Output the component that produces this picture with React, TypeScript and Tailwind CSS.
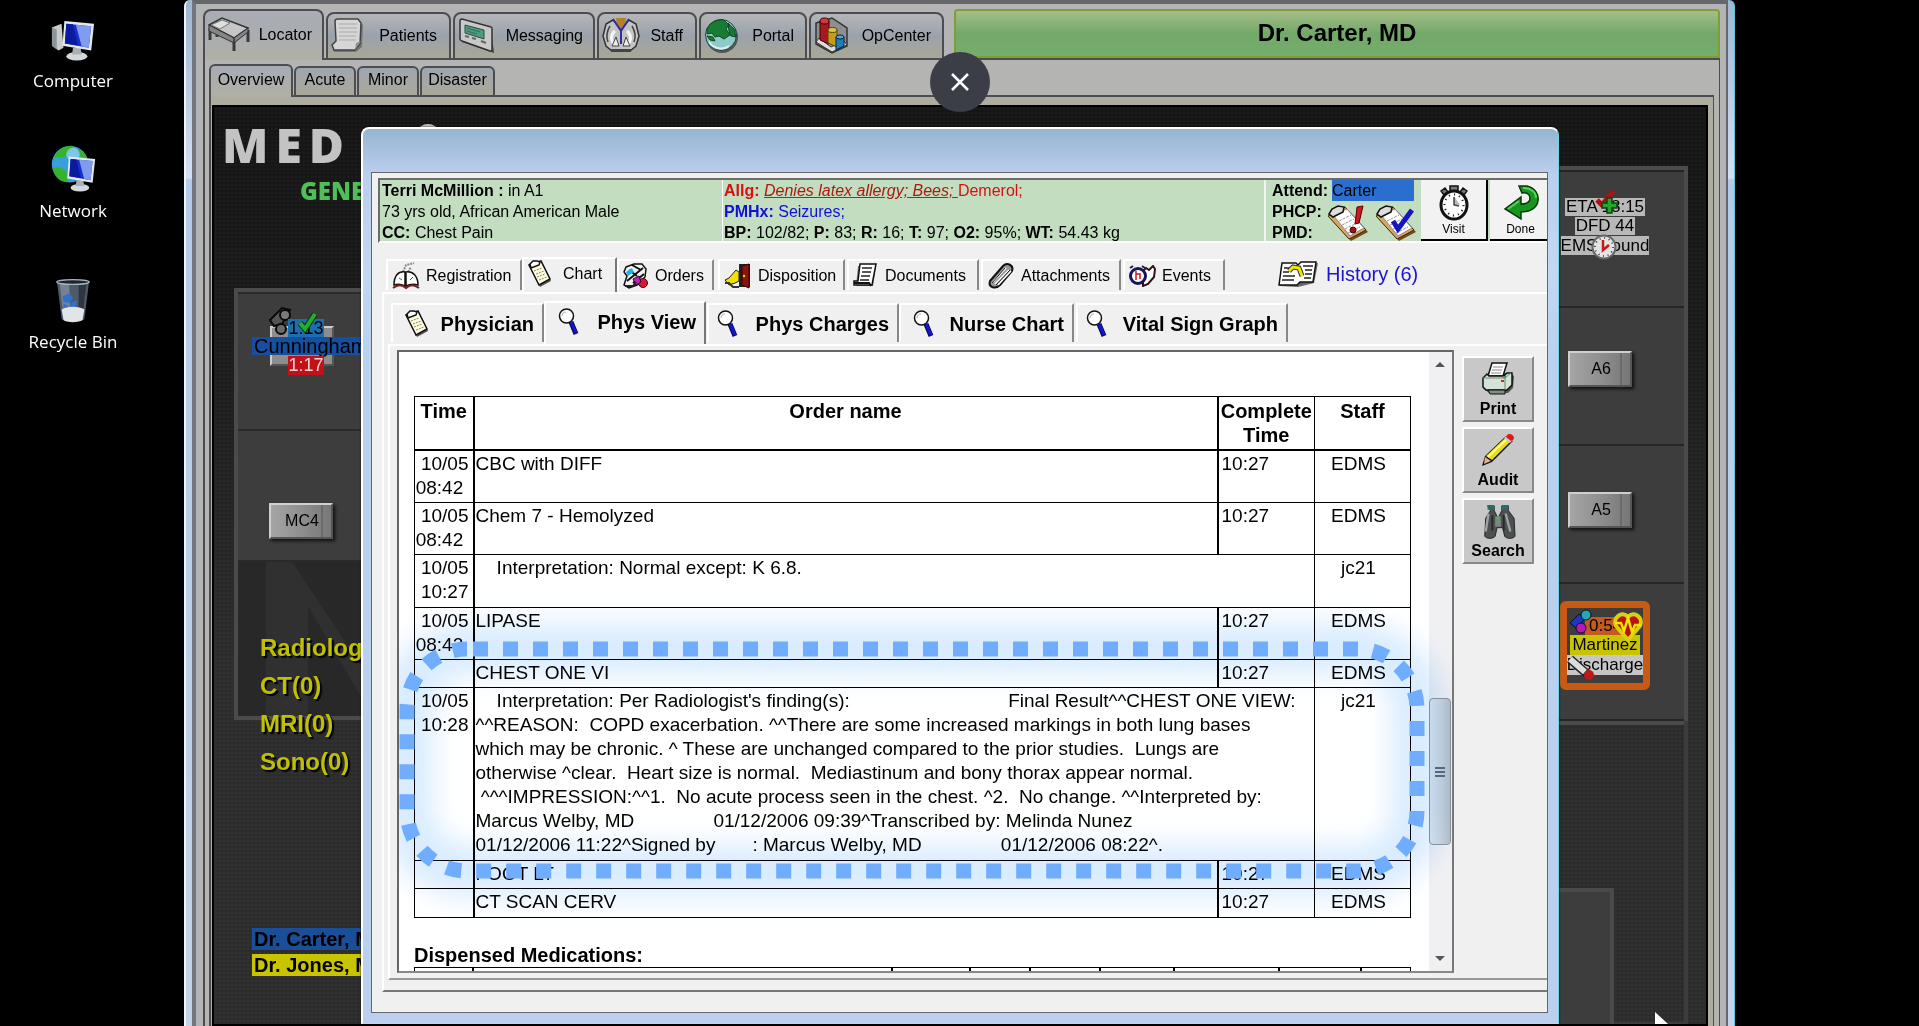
import React from "react";

/* ---------- desktop icons ---------- */
const Monitor = ({ x = 0, y = 0, s = 1 }: { x?: number; y?: number; s?: number }) => (
  <g transform={`translate(${x} ${y}) scale(${s})`}>
    <ellipse cx="15" cy="37" rx="11" ry="4.500" fill="#d4d8dc" />
    <path d="M11 28h8l1 7H10z" fill="#aab0b6" />
    <path d="M2 0L33 3 30 31 0 26z" fill="#e4e8ec" />
    <path d="M4 3L30 5.500 27.500 28 2.500 23.500z" fill="#1530c8" />
    <path d="M14 4L30 5.500 27.500 28 20 26.500z" fill="#7f9cf0" />
    <path d="M4 3l7 .6 5 22-13.500-2.100z" fill="#0a1ba0" />
  </g>
);
const ComputerIcon = () => (
  <svg width="48" height="44" viewBox="0 0 48 46" aria-hidden="true">
    <path d="M2 9l10-4 2 25-5 3-7-5z" fill="#c9ccce" />
    <path d="M2 9l5 2v21l-5-4z" fill="#8f9498" />
    <Monitor x={13} y={2} />
  </svg>
);
const NetworkIcon = () => (
  <svg width="48" height="50" viewBox="0 0 48 52" aria-hidden="true">
    <circle cx="21" cy="22" r="19" fill="#3a9ed8" />
    <path d="M4 15C9 5 17 2 24 3c-1 5-6 5-7 10-3 3-8 2-13 2zM3 26c5-2 11 0 14 4s0 9 1 11C8 40 4 33 3 26zM29 6c6 3 9 7 10 12l-8-3z" fill="#36b32c" />
    <circle cx="24" cy="12" r="7" fill="#bff0ff" opacity=".5" />
    <Monitor x={18} y={14} s={0.88} />
  </svg>
);
const RecycleIcon = () => (
  <svg width="38" height="46" viewBox="0 0 40 48" aria-hidden="true">
    <path d="M3 3h34l-5 40c-4 4-20 4-24 0z" fill="#4e5a68" />
    <path d="M6 6h10l1 26H9z" fill="#8793a2" opacity=".7" />
    <path d="M26 6h8l-3 26h-5z" fill="#2c3540" />
    <path d="M9 19l7-3 4 5-4 5-6-1zM18 26l6-3-1 9-7 1zM10 27l5 2-1 5-4-2z" fill="#2f70d0" />
    <path d="M8 33c6-4 18-4 24 0l-2 11c-5 3-16 3-20 0z" fill="#e2e5e8" />
    <ellipse cx="20" cy="4" rx="17" ry="2.500" fill="#1d2630" stroke="#a7b5c2" strokeWidth="1.500" />
  </svg>
);

/* ---------- application tab icons ---------- */
const BedIcon = () => (
  <svg width="42" height="36" viewBox="0 0 42 36" aria-hidden="true">
    <path d="M2 11v12M9 12v8M26 22v12M40 13v12" stroke="#3a3a3a" strokeWidth="3" />
    <path d="M1 8L14 1l26 10-14 10z" fill="#c6c6c6" stroke="#333" strokeWidth="1.500" />
    <path d="M1 8l25 13v5L1 14zM26 21l14-10v4L26 26z" fill="#858585" stroke="#333" />
    <path d="M3 8L14 3l8 3-10 6z" fill="#dedede" stroke="#777" />
  </svg>
);
const PaperIcon = () => (
  <svg width="34" height="36" viewBox="0 0 34 36" aria-hidden="true">
    <path d="M6 2h22l4 5-1 22-6 5H3l-2-6 4-4z" fill="#777" />
    <path d="M4 3c0-2 2-2 3-2h20l3 4-1 21-5 6H3l-2-5 4-4z" fill="#d6d6d6" stroke="#444" strokeWidth="1.500" />
    <path d="M8 6h18M8 10h18M8 14h18M8 18h17M8 22h17" stroke="#a9a9a9" />
    <path d="M24 32l1-7 5-2z" fill="#8f8f8f" />
  </svg>
);
const PagerIcon = () => (
  <svg width="37" height="36" viewBox="0 0 37 36" aria-hidden="true">
    <path d="M3 2l30 9 3 24-32-11z" fill="#444" />
    <path d="M2 3c0-2 1-2 2-2l29 8c1 0 1 1 1 2v21c0 1-1 1-2 1L4 23c-2-1-2-1-2-3z" fill="#c9c9c9" stroke="#333" strokeWidth="1.500" />
    <path d="M7 7l19 5v9L7 15z" fill="#4f9a80" stroke="#2f4f45" />
    <path d="M9 10l13 4M9 13l10 3" stroke="#2f6f58" />
    <path d="M7 18l4 1M14 20l4 1M23 23l5 2" stroke="#666" strokeWidth="2" />
  </svg>
);
const StaffIcon = () => (
  <svg width="38" height="36" viewBox="0 0 38 36" aria-hidden="true">
    <path d="M11 2L4 6 1 18l3 10 6 5h18l6-5 3-10-3-12-7-4-8 9z" fill="#c3c3c3" stroke="#333" strokeWidth="1.500" />
    <path d="M14 0h10l-1 8-4 3-4-3z" fill="#b58028" />
    <path d="M11 1l8 12 8-12M19 12v14" fill="none" stroke="#2831a0" strokeWidth="2" />
    <path d="M8 8c-3 5-4 11-2 16M30 8c3 5 4 11 2 16" fill="none" stroke="#444" strokeWidth="1.500" />
    <path d="M13 13c-4 3-5 9-1 13M25 13c4 3 5 9 1 13" fill="none" stroke="#f4f4f4" strokeWidth="3" />
    <path d="M14 19l-4 9h7zM24 19l4 9h-7z" fill="#eee" stroke="#444" />
    <path d="M9 31h20v3H9z" fill="#444" />
  </svg>
);
const GlobeIcon = () => (
  <svg width="34" height="36" viewBox="0 0 34 36" aria-hidden="true">
    <circle cx="18" cy="19" r="16" fill="#555" />
    <circle cx="17" cy="17" r="15.500" fill="#8fc9c9" stroke="#24443f" />
    <path d="M3 11C7 4 13 1 20 2l5 5-3 4 4 6-6 4-5-3-4 1-3-4-5 1zM24 5l6 6 2 8-5-1-2-5zM3 18l6 1 2 4-5-1z" fill="#187c34" stroke="#0d4a20" />
    <path d="M5 24c4 6 13 9 20 4" stroke="#d9f2f2" strokeWidth="2" fill="none" />
  </svg>
);
const BarsIcon = () => (
  <svg width="36" height="38" viewBox="0 0 36 38" aria-hidden="true">
    <path d="M2 6L18 1l15 10v18L18 36 2 27z" fill="#8f8f8f" stroke="#333" strokeWidth="1.500" />
    <path d="M2 25l16 10 15-7-3-4-13 6L5 21z" fill="#dedede" stroke="#333" />
    <path d="M6 4h9v23l-9-4z" fill="#a51a20" stroke="#400" />
    <path d="M14 13h9v17l-9-4z" fill="#c99a20" stroke="#540" />
    <path d="M22 20h8v9l-8 4z" fill="#1b80b8" stroke="#024" />
    <ellipse cx="10.500" cy="4" rx="4.500" ry="3" fill="#cf3a3a" stroke="#400" />
    <ellipse cx="18.500" cy="13" rx="4.500" ry="2.500" fill="#e0bd50" stroke="#540" />
    <ellipse cx="26" cy="20" rx="4" ry="2" fill="#53aad4" stroke="#024" />
  </svg>
);

/* ---------- chart window icons ---------- */
const BookIcon = () => (
  <svg width="28" height="28" viewBox="0 0 28 28" aria-hidden="true">
    <path d="M11 10l3-7 8-2M16 10l3-5" stroke="#888" fill="none" strokeWidth="2" strokeDasharray="2 1" />
    <path d="M2 23C2 14 6 9 13 10v14c-4-2-8-2-11-1zM26 23c0-9-5-14-12-13v14c4-2 8-2 12-1z" fill="#fff" stroke="#111" strokeWidth="1.500" />
    <path d="M1 26c5-4 10-3 13 0 3-3 8-4 13 0" fill="none" stroke="#722" strokeWidth="2" />
    <path d="M7 16l3 2M18 18l3-3" stroke="#555" />
  </svg>
);
const ClipboardIcon = () => (
  <svg width="24" height="27" viewBox="0 0 24 27" aria-hidden="true">
    <path d="M2 6L14 2l9 19-11 6z" fill="#555" />
    <path d="M1 5L13 1l9 18-11 6z" fill="#fffbe0" stroke="#111" strokeWidth="1.500" />
    <path d="M2 4l3-3 4 0 3 1-1 3-8 3z" fill="#fff" stroke="#111" strokeWidth="1.500" />
    <path d="M6 11l8-3M8 14l8-3M9 17l8-3M11 20l8-3" stroke="#8a8660" strokeDasharray="2 1" />
  </svg>
);
const OrdersIcon = () => (
  <svg width="26" height="26" viewBox="0 0 26 26" aria-hidden="true">
    <path d="M3 4l8-3h8l4 5-1 8-8 8-8 3-5-3 3-9-3-4z" fill="#f2f2f2" stroke="#111" strokeWidth="1.500" />
    <path d="M9 2l9 5M6 7l8 6M4 18L20 5M10 20l11-9" stroke="#111" strokeWidth="2" />
    <path d="M3 9l6-4 2 4-6 4z" fill="#1db2e8" />
    <circle cx="20" cy="20" r="4.500" fill="#d81830" stroke="#400" />
    <path d="M10 16l6-3 2 6-5 3z" fill="#c020b8" stroke="#303" />
    <path d="M2 23h8l3-4" stroke="#222" strokeWidth="2" fill="none" />
  </svg>
);
const DoorIcon = () => (
  <svg width="28" height="26" viewBox="0 0 28 26" aria-hidden="true">
    <path d="M15 1h11v23H15z" fill="#222" />
    <path d="M18 3l7-2v24l-7-3z" fill="#8c1212" stroke="#300" />
    <path d="M1 17l4-2 7-8 3 2v9l-4 2-6 2z" fill="#f2e000" stroke="#222" />
    <path d="M1 20h4l4 4h6" stroke="#333" strokeWidth="2" fill="none" />
    <circle cx="20" cy="13" r="1.200" fill="#fc0" />
  </svg>
);
const DocsIcon = () => (
  <svg width="26" height="26" viewBox="0 0 26 26" aria-hidden="true">
    <path d="M5 3h18l-3 20H3z" fill="#777" />
    <path d="M7 1h16l-4 21H1v-4h4z" fill="#fff" stroke="#111" strokeWidth="1.500" />
    <path d="M9 5h10M9 9h9M8 13h9M7 17h9" stroke="#222" strokeWidth="1.500" />
    <path d="M1 20h15l2 3" stroke="#111" strokeWidth="2" fill="none" />
  </svg>
);
const ClipIcon = () => (
  <svg width="28" height="27" viewBox="0 0 28 27" aria-hidden="true">
    <path d="M3 19L16 4c4-4 11-1 9 5L13 23c-5 5-12 2-10-4z" fill="#999" stroke="#111" strokeWidth="2" />
    <path d="M6 20L19 6M8 22L22 8M11 23L24 9" stroke="#fff" strokeWidth="1.500" />
    <path d="M5 21L18 6M9 23L23 8" stroke="#222" />
  </svg>
);
const EventsIcon = () => (
  <svg width="27" height="22" viewBox="0 0 27 22" aria-hidden="true">
    <path d="M14 6l3-3 3 2 4-4 2 3-1 8-6 7-5 2z" fill="#fff" stroke="#311" strokeWidth="2" />
    <circle cx="9" cy="11" r="7.500" fill="#fff" stroke="#15155a" strokeWidth="3" />
    <path d="M7 6v9M7 9h4v5" stroke="#d01818" strokeWidth="1.500" fill="none" />
    <path d="M1 3l3-2M13 1l3 2" stroke="#222" strokeWidth="2" />
  </svg>
);
const MagnifierIcon = () => (
  <svg width="22" height="28" viewBox="0 0 22 28" aria-hidden="true">
    <path d="M13 14l5 12" stroke="#0a0a55" strokeWidth="5" />
    <path d="M13 14l5 11" stroke="#1414d8" strokeWidth="3" />
    <ellipse cx="8.500" cy="8" rx="7" ry="7" fill="#fff" stroke="#111" strokeWidth="1.500" />
    <path d="M4 8c0-3 2-4 4-4" stroke="#aaa" fill="none" />
  </svg>
);
const HistoryIcon = () => (
  <svg width="40" height="27" viewBox="0 0 40 27" aria-hidden="true">
    <path d="M3 4l15 3 22-5-4 20-16 4-18-1z" fill="#666" />
    <path d="M4 2h14l2 2 3-3h15l-3 20H22l-3 3H1z" fill="#fff" stroke="#111" strokeWidth="1.500" />
    <path d="M6 7h5M5 11h6M5 15h12M4 19h12M25 5h10M27 9h7M27 13h7M26 17h7" stroke="#222" strokeWidth="1.500" />
    <path d="M11 10l4-4 6 1 3 8" stroke="#333" strokeWidth="5" fill="none" />
    <path d="M11 10l4-4 6 1 3 8" stroke="#f0e800" strokeWidth="3" fill="none" />
  </svg>
);
const ChartNote = ({ kind }: { kind: "alert" | "check" }) => (
  <svg width="42" height="37" viewBox="0 0 42 37" aria-hidden="true">
    <path d="M2 12l17-9 22 24-17 9z" fill="#7a4a10" />
    <path d="M1 11L18 2l21 23-17 9z" fill="#d9a860" stroke="#3a2a10" />
    <path d="M6 10l14-6 17 19-14 8z" fill="#fff" stroke="#888" />
    <path d="M2 9l3-5 6-3 6 1-1 5-10 5z" fill="#ddd" stroke="#111" strokeWidth="1.500" />
    <path d="M12 16l12-6M15 20l12-6M18 24l12-6M21 28l12-6" stroke="#999" strokeDasharray="3 1" />
    {kind === "alert" ? (
      <g>
        <path d="M30 2l6-1-4 17-4 1z" fill="#d01822" stroke="#500" />
        <circle cx="26" cy="25" r="3" fill="#a01018" stroke="#400" />
      </g>
    ) : (
      <path d="M18 16l5 8L37 5" stroke="#1616c0" strokeWidth="5" fill="none" />
    )}
  </svg>
);
const StopwatchIcon = () => (
  <svg width="32" height="36" viewBox="0 0 32 36" aria-hidden="true">
    <path d="M12 1h8v5h-8zM3 6l4-3 3 4-4 3zM29 6l-4-3-3 4 4 3z" fill="#777" stroke="#111" strokeWidth="1.500" />
    <ellipse cx="16" cy="20" rx="13" ry="14" fill="#fff" stroke="#111" strokeWidth="3" />
    <ellipse cx="16" cy="20" rx="9.500" ry="10.500" fill="none" stroke="#222" strokeWidth="2" strokeDasharray="1.200 4" />
    <path d="M16 11v9h6z" fill="#bbb" />
    <path d="M16 12v8l5 1" stroke="#444" strokeWidth="1.500" fill="none" />
  </svg>
);
const DoneIcon = () => (
  <svg width="36" height="36" viewBox="0 0 36 36" aria-hidden="true">
    <path d="M16 1h8c8 2 12 8 11 15-1 7-8 11-17 11v7L2 24l16-12v7c6 0 9-2 9-6s-4-6-8-5z" fill="#16961e" stroke="#053a08" strokeWidth="1.500" />
    <path d="M20 3c8 0 13 4 13 10M5 24l11-8" stroke="#5fd060" strokeWidth="2" fill="none" />
  </svg>
);
const PrinterIcon = () => (
  <svg width="34" height="34" viewBox="0 0 34 34" aria-hidden="true">
    <path d="M4 15l6-4h19l4 3-1 12-5 5H8l-6-5z" fill="#555" />
    <path d="M11 1h15l-4 13H7z" fill="#fff" stroke="#111" strokeWidth="1.500" />
    <path d="M12 5h10M11 8h10M10 11h10" stroke="#888" />
    <path d="M2 16l4-4 2 2h15l3-3h5v12l-5 5H5l-3-3z" fill="#d3e4d6" stroke="#111" strokeWidth="1.500" />
    <path d="M2 16h22l6-5M24 16v12" stroke="#6f8873" fill="none" />
    <path d="M20 19h3" stroke="#e02020" strokeWidth="2" />
    <path d="M22 15h3" stroke="#20b050" strokeWidth="2" />
    <path d="M7 28h17v4H9z" fill="#7a8f7c" stroke="#111" />
  </svg>
);
const PencilIcon = () => (
  <svg width="34" height="34" viewBox="0 0 34 34" aria-hidden="true">
    <path d="M1 33l3-10L25 3l7 5L11 29z" fill="#111" />
    <path d="M5 23L24 5l5 4L11 27z" fill="#e8dd18" />
    <path d="M7 24L26 6" stroke="#fffb90" strokeWidth="2" />
    <path d="M4 24l6 4-7 3z" fill="#e0b090" />
    <path d="M23 5l3-3 6 5-3 3z" fill="#c8c8c8" />
    <path d="M26 2c4-3 9 2 6 5l-2 1-5-4z" fill="#e01818" />
  </svg>
);
const BinocularsIcon = () => (
  <svg width="38" height="38" viewBox="0 0 38 38" aria-hidden="true">
    <path d="M8 2h7v5l3 6v8h2v-8l3-6V2h7v5l6 8 1 19c-2 3-9 3-11 0l-2-9h-6l-2 9c-2 3-9 3-11 0l1-19 5-8z" fill="#4c5050" stroke="#222" />
    <path d="M8 1h7v5H8zM23 1h7v5h-7z" fill="#2c6b66" />
    <path d="M9 10L6 29M27 10l5 19" stroke="#9da3a3" strokeWidth="2.500" />
    <path d="M16 13h6v11h-6z" fill="#7d8484" />
    <path d="M13 12v16M25 12v16" stroke="#262a2a" strokeWidth="2" />
    <path d="M17 15h3" stroke="#40c040" strokeWidth="2" />
  </svg>
);

/* ---------- shared pieces ---------- */
const AppTab = ({ label, icon, className, active }: { label: string; icon: React.ReactNode; className: string; active?: boolean }) => (
  <button
    type="button"
    role="tab"
    aria-selected={!!active}
    className={`flex items-center justify-between rounded-t-lg border-2 border-[#4c4d50] pl-[3px] text-base ${
      active
        ? "h-[51px] border-b-0 bg-linear-to-b from-[#a9adb4] via-[#a9adb2] to-[#b1b0a2] pb-[2px]"
        : "h-12 bg-linear-to-b from-[#b4b6b8] via-[#9ba2ad] to-[#a9a894]"
    } ${className}`}
  >
    {icon}
    <span>{label}</span>
  </button>
);

const SubTab = ({ label, className, active }: { label: string; className: string; active?: boolean }) => (
  <button
    type="button"
    role="tab"
    aria-selected={!!active}
    className={`rounded-t-md border-2 border-[#4c4d50] pb-1 text-base leading-5 ${
      active ? "h-[33px] border-b-0 bg-linear-to-b from-[#a7abb4] to-[#b1b0a4]" : "h-[31px] bg-linear-to-b from-[#9fa6b1] to-[#a9a898]"
    } ${className}`}
  >
    {label}
  </button>
);

const ChartTab = ({ label, icon, className, active }: { label: string; icon: React.ReactNode; className: string; active?: boolean }) => (
  <button
    type="button"
    role="tab"
    aria-selected={!!active}
    className={`flex shrink-0 items-center whitespace-nowrap border-t-2 border-l-2 border-white bg-[#f0f0f0] pl-1 text-base ${
      active ? "h-[35px] gap-[11px] border-r-2 border-r-[#777] pb-1" : "mb-[2px] h-[31px] gap-[6px] border-r-2 border-r-[#888]"
    } ${className}`}
  >
    {icon}
    {label}
  </button>
);

const ViewTab = ({ label, icon, className, active }: { label: string; icon: React.ReactNode; className: string; active?: boolean }) => (
  <button
    type="button"
    role="tab"
    aria-selected={!!active}
    className={`flex shrink-0 items-center justify-between whitespace-nowrap border-t-2 border-l-2 border-white bg-[#f0f0f0] pr-2 text-xl font-bold ${
      active ? "h-[43px] border-r-2 border-r-[#777] pb-1" : "mb-[2px] h-[39px] border-r-2 border-r-[#888]"
    } ${className}`}
  >
    {icon}
    {label}
  </button>
);

const ToolButton = ({ label, icon }: { label: string; icon: React.ReactNode }) => (
  <button
    type="button"
    className="flex h-[66px] w-full flex-col items-center justify-between border-2 border-t-white border-r-[#888] border-b-[#888] border-l-white bg-[#c8c8c8] pt-1 text-base leading-[22px] font-bold"
  >
    {icon}
    {label}
  </button>
);

const Bed = ({ label, className }: { label: string; className: string }) => (
  <button
    type="button"
    className={`absolute flex h-9 w-16 items-stretch border-2 border-t-[#cfcfcf] border-r-[#555] border-b-[#555] border-l-[#cfcfcf] bg-linear-to-r from-[#a5a5a5] via-[#8f8f8f] to-[#777] text-base text-black shadow-[2px_2px_3px_#111] ${className}`}
  >
    <span className="flex flex-1 items-center justify-center border-r-2 border-[#6a6a6a] pl-3">{label}</span>
    <span className="w-2" />
  </button>
);

type Row = { time: string[]; name: React.ReactNode; done?: string; staff: string; h: string };
const report = [
  "    Interpretation: Per Radiologist's finding(s):                              Final Result^^CHEST ONE VIEW:",
  "^^REASON:  COPD exacerbation. ^^There are some increased markings in both lung bases",
  "which may be chronic. ^ These are unchanged compared to the prior studies.  Lungs are",
  "otherwise ^clear.  Heart size is normal.  Mediastinum and bony thorax appear normal.",
  " ^^^IMPRESSION:^^1.  No acute process seen in the chest. ^2.  No change. ^^Interpreted by:",
  "Marcus Welby, MD               01/12/2006 09:39^Transcribed by: Melinda Nunez",
  "01/12/2006 11:22^Signed by       : Marcus Welby, MD               01/12/2006 08:22^.",
].join("\n");
const rows: Row[] = [
  { time: ["10/05", "08:42 "], name: "CBC with DIFF", done: "10:27", staff: "EDMS", h: "h-[53px]" },
  { time: ["10/05", "08:42 "], name: "Chem 7 - Hemolyzed", done: "10:27", staff: "EDMS", h: "h-[52px]" },
  { time: ["10/05", "10:27"], name: "    Interpretation: Normal except: K 6.8.", staff: "jc21", h: "h-[53px]" },
  { time: ["10/05", "08:42 "], name: "LIPASE", done: "10:27", staff: "EDMS", h: "h-[52px]" },
  { time: [], name: "CHEST ONE VI", done: "10:27", staff: "EDMS", h: "h-[28px]" },
  { time: ["10/05", "10:28"], name: report, staff: "jc21", h: "h-[173px]" },
  { time: [], name: "FOOT LT", done: "10:27", staff: "EDMS", h: "h-[28px]" },
  { time: [], name: "CT SCAN CERV", done: "10:27", staff: "EDMS", h: "h-[29px]" },
];

const OrdersTable = () => (
  <table className="w-full table-fixed border-collapse border border-black">
    <colgroup>
      <col className="w-[59px]" />
      <col />
      <col className="w-[97px]" />
      <col className="w-24" />
    </colgroup>
    <thead>
      <tr className="h-[53px] border-b-2 border-black align-top text-xl leading-6">
        <th className="border-r-2 border-black pt-[2px]">Time</th>
        <th className="border-r-2 border-black pt-[2px]">Order name</th>
        <th className="border-r border-black pt-[2px]">Complete Time</th>
        <th className="border-r border-black pt-[2px]">Staff</th>
      </tr>
    </thead>
    <tbody className="text-[19px]">
      {rows.map((r, i) => (
        <tr key={i} className={`border-b border-black align-top leading-6 ${r.h}`}>
          <td className="border-r-2 border-black pt-px pr-1 text-right whitespace-pre">{r.time.join("\n")}</td>
          <td colSpan={r.done ? 1 : 2} className="border-r border-black pt-px pl-px text-left whitespace-pre">
            {r.name}
          </td>
          {r.done && <td className="border-r border-l-2 border-black pt-px pl-[3px] text-left">{r.done}</td>}
          <td className="pt-px pr-2 text-center">{r.staff}</td>
        </tr>
      ))}
    </tbody>
  </table>
);

const Callout = () => (
  <svg className="pointer-events-none absolute top-[297px] right-[35px] left-2 h-[222px] w-[calc(100%-43px)] overflow-visible" aria-hidden="true">
    <defs>
      <filter id="glow" x="-20%" y="-40%" width="140%" height="180%">
        <feGaussianBlur stdDeviation="13" />
      </filter>
    </defs>
    <rect width="100%" height="100%" rx="60" fill="none" stroke="#bfe0ff" strokeOpacity=".6" strokeWidth="52" filter="url(#glow)" className="mix-blend-multiply" />
    <rect width="100%" height="100%" rx="60" fill="none" stroke="#70adff" strokeWidth="15" strokeDasharray="15 15" strokeDashoffset="-6" />
  </svg>
);

const ScrollBar = () => (
  <div className="flex w-[23px] shrink-0 flex-col bg-[#f0f0f2] pr-px" aria-hidden="true">
    <div className="flex h-4 items-end justify-center">
      <svg width="12" height="8" viewBox="0 0 12 8"><path d="M1 7l5-5 5 5z" fill="#555" /></svg>
    </div>
    <div className="flex-[3]" />
    <div className="flex h-[147px] flex-col items-center justify-center gap-[2px] rounded-sm border border-[#90979f] bg-linear-to-r from-[#e6ebef] via-[#cfd8df] to-[#b5bfc8]">
      <span className="h-[2px] w-2.5 bg-[#5c6c7c]" />
      <span className="h-[2px] w-2.5 bg-[#5c6c7c]" />
      <span className="h-[2px] w-2.5 bg-[#5c6c7c]" />
    </div>
    <div className="flex-[1]" />
    <div className="flex h-4 items-start justify-center">
      <svg width="12" height="8" viewBox="0 0 12 8"><path d="M1 1l5 5 5-5z" fill="#555" /></svg>
    </div>
  </div>
);

const Board = () => (
  <div className="relative flex-1 overflow-hidden border-2 border-black bg-[radial-gradient(#ffffff08_1px,transparent_1px),linear-gradient(to_bottom,#151515,#1b1b1b_25%,#2c2c2d_60%,#2c2c2d)] bg-[size:4px_4px,100%_100%]">
    <div className="absolute top-[12px] left-2 flex gap-[7px] font-['Open_Sans',sans-serif] text-5xl leading-[52px] font-extrabold text-[#c3c3c3]">
      <span>M</span>
      <span>E</span>
      <span>D</span>
    </div>
    <svg className="absolute top-[16px] left-[204px]" width="20" height="8" viewBox="0 0 20 8" aria-hidden="true"><ellipse cx="10" cy="9" rx="10" ry="8" fill="#c3c3c3" /></svg>
    <div className="absolute top-[68px] left-[86px] font-['Open_Sans',sans-serif] text-2xl leading-8 font-extrabold text-[#4fbf58]">GENE</div>

    {/* left rooms */}
    <div className="absolute top-[181px] left-5 w-60 border-4 border-[#4b4b4b]">
      <div className="h-[139px] border-t-2 border-b-2 border-[#2a2a2a] bg-[#3d3d3d]" />
      <div className="h-[131px] border-b-2 border-[#2a2a2a] bg-[#3d3d3d]" />
      <div className="h-[154px] overflow-hidden bg-[#282828]">
        <svg width="200" height="154" viewBox="0 0 200 154" aria-hidden="true">
          <path d="M28 0h26l80 120V0h26v154h-26L70 44v110H28z" fill="#303030" />
        </svg>
      </div>
    </div>
    <div className="absolute top-[219px] left-[56px] h-10 w-16 border-2 border-t-[#ccc] border-r-[#555] border-b-[#555] border-l-[#ccc] bg-[#8d8d8d]" />
    <svg className="absolute top-[199px] left-[54px]" width="26" height="32" viewBox="0 0 26 32" aria-hidden="true">
      <path d="M2 14L14 2l8 2-8 14-8 2z" fill="#555" stroke="#0a0a0a" strokeWidth="2" />
      <circle cx="17" cy="9" r="5" fill="#7a7a7a" stroke="#0a0a0a" strokeWidth="2" />
      <circle cx="13" cy="23" r="5" fill="#6a6a6a" stroke="#0a0a0a" strokeWidth="2" />
    </svg>
    <div className="absolute top-[212px] left-[74px] w-9 bg-[#1c6fae] text-center text-lg leading-[18px]">1:13</div>
    <svg className="absolute top-[204px] left-[84px]" width="20" height="22" viewBox="0 0 20 22" aria-hidden="true">
      <path d="M2 12l5 6L17 3" stroke="#0c3a0c" strokeWidth="6" fill="none" />
      <path d="M2 12l5 6L17 3" stroke="#22b02c" strokeWidth="4" fill="none" />
    </svg>
    <div className="absolute top-[230px] left-[38px] w-[120px] bg-[#164f9f] pl-[2px] text-xl leading-[18px]">Cunningham</div>
    <div className="absolute top-[249px] left-[74px] w-9 bg-[#c01218] text-center text-lg leading-[19px] text-[#e6d6d6]">1:17</div>
    <Bed label="MC4" className="top-[396px] left-[55px]" />
    <div className="absolute top-[522px] left-[46px] text-2xl leading-[38px] font-bold text-[#c1c000] [text-shadow:2px_2px_1px_#000]">
      <p>Radiolog</p>
      <p>CT(0)</p>
      <p>MRI(0)</p>
      <p>Sono(0)</p>
    </div>
    <div className="absolute top-[821px] left-[38px] flex w-40 flex-col gap-1 text-xl leading-[22px] font-bold whitespace-nowrap">
      <p className="bg-[#1a4f98] pl-[2px]">Dr. Carter, MD</p>
      <p className="bg-[#c8c400] pl-[2px]">Dr. Jones, MD</p>
    </div>

    {/* right rooms */}
    <div className="absolute top-[59px] right-[18px] w-96 border-4 border-[#4b4b4b] bg-[#3d3d3d]">
      <div className="h-[138px] border-t-2 border-b-2 border-[#252525]" />
      <div className="h-[138px] border-b-2 border-[#252525]" />
      <div className="h-[138px] border-b-2 border-[#252525]" />
      <div className="h-[137px] border-b-2 border-[#252525]" />
    </div>
    <div className="absolute top-[614px] right-[18px] bottom-0 w-96 border-r-4 border-b-2 border-[#3c3c3c]" />
    <div className="absolute right-[92px] bottom-0 h-[136px] w-80 border-t-4 border-r-4 border-[#4a4a4a] bg-[#3d3d3d]" />

    <div className="absolute top-[91px] right-[55px] flex w-[92px] flex-col items-center text-[17px] leading-[18px] whitespace-nowrap text-black">
      <p className="bg-[#b8b8b8] px-px">ETA 18:15</p>
      <p className="mt-px bg-[#b8b8b8] px-px">DFD 44</p>
      <p className="mt-px bg-[#b8b8b8] leading-[19px]">EMS bound</p>
    </div>
    <svg className="absolute top-[81px] right-[84px]" width="30" height="30" viewBox="0 0 30 30" aria-hidden="true">
      <path d="M5 12l5 5L21 3" stroke="#b01015" strokeWidth="5" fill="none" />
      <path d="M10 15h5v-5h5v5h5v5h-5v5h-5v-5h-5z" fill="#25a42e" stroke="#0b450f" strokeWidth="1.500" />
    </svg>
    <svg className="absolute top-[127px] right-[89px]" width="26" height="26" viewBox="0 0 26 26" aria-hidden="true">
      <circle cx="13" cy="13" r="11.500" fill="#e4e4e4" stroke="#666" strokeWidth="2" />
      <circle cx="13" cy="13" r="9" fill="none" stroke="#222" strokeWidth="1.500" strokeDasharray="1 3.700" />
      <path d="M12 6v10l6-5" stroke="#d01515" strokeWidth="2.500" fill="none" />
    </svg>
    <Bed label="A6" className="top-[244px] right-[74px]" />
    <Bed label="A5" className="top-[385px] right-[74px]" />
    <div className="absolute top-[494px] right-[56px] flex h-[89px] w-[90px] flex-col items-center rounded-md border-[7px] border-[#c85a14] pt-[9px] text-[17px] text-black">
      <p className="w-10 bg-[#c25a22] pl-1 leading-[18px]">0:54</p>
      <p className="w-[70px] bg-[#c8c400] text-center leading-5">Martinez</p>
      <p className="bg-[#c6c6c6] text-center leading-5">Discharge</p>
    </div>
    <svg className="absolute top-[499px] right-[60px]" width="80" height="80" viewBox="0 0 80 80" aria-hidden="true">
      <path d="M4 17l9-9 6 5-9 9z" fill="#1a38c8" stroke="#111" />
      <circle cx="20" cy="9" r="5" fill="#22a8b8" stroke="#111" />
      <circle cx="15" cy="22" r="5" fill="#b818b8" stroke="#111" />
      <path d="M62 34L50 20c-4-8 6-16 12-9 6-7 16 1 12 9z" fill="#b81418" stroke="#d8cf10" strokeWidth="4" />
      <path d="M49 17h6l3 8 4-13 4 14 3-7h6" stroke="#f4e400" strokeWidth="2.500" fill="none" />
      <path d="M4 53l17 15" stroke="#222" strokeWidth="9" />
      <path d="M4 53l15 13" stroke="#ddd" strokeWidth="6" />
      <circle cx="23" cy="69" r="5" fill="#c01818" />
    </svg>
    <svg className="absolute right-[38px] bottom-0" width="14" height="12" viewBox="0 0 14 12" aria-hidden="true"><path d="M1 0l13 12H1z" fill="#fff" /></svg>
  </div>
);

const PatientBar = () => (
  <div className="flex h-[65px] border-t-2 border-b-2 border-l-2 border-t-[#6b6b6b] border-b-white border-l-[#6b6b6b] bg-[#c2ddbf] text-base leading-[21px] whitespace-nowrap">
    <div className="w-[343px] shrink-0 border-r border-white pl-[2px]">
      <p><b>Terri McMillion :</b> in A1</p>
      <p>73 yrs old, African American Male</p>
      <p><b>CC:</b> Chest Pain</p>
    </div>
    <div className="flex-1 border-r-2 border-white/70 pl-px">
      <p className="text-[#d81010]"><b>Allg:</b> <i className="text-[#a81c10] underline decoration-[#d81010]">Denies latex allergy; Bees; </i>Demerol;</p>
      <p className="text-[#1010d8]"><b>PMHx:</b> Seizures;</p>
      <p><b>BP:</b> 102/82; <b>P:</b> 83; <b>R:</b> 16; <b>T:</b> 97; <b>O2:</b> 95%; <b>WT:</b> 54.43 kg</p>
    </div>
    <div className="flex w-[155px] shrink-0 flex-col pl-[6px]">
      <div className="flex">
        <label htmlFor="attend" className="w-[60px] font-bold">Attend:</label>
        <input id="attend" defaultValue="Carter" className="h-[21px] w-[82px] bg-[#2a6fd0] text-black outline-none" />
      </div>
      <div className="flex justify-between">
        <div className="font-bold">
          <p>PHCP:</p>
          <p>PMD:</p>
        </div>
        <div className="flex gap-[6px] pt-[2px] pr-1">
          <button type="button" aria-label="Clinical alerts"><ChartNote kind="alert" /></button>
          <button type="button" aria-label="Clinical review"><ChartNote kind="check" /></button>
        </div>
      </div>
    </div>
    <div className="flex shrink-0 gap-[2px]">
      <button type="button" className="flex w-[67px] flex-col items-center border-r-2 border-b-2 border-black bg-[#f2f2f2] pt-[5px] text-xs leading-4">
        <StopwatchIcon />
        Visit
      </button>
      <button type="button" className="flex w-[57px] flex-col items-center border-b-2 border-black bg-[#f2f2f2] pt-[5px] pl-1 text-xs leading-4">
        <DoneIcon />
        Done
      </button>
    </div>
  </div>
);

const ChartWindow = () => (
  <section className="absolute top-[127px] right-[360px] bottom-[2px] left-[361px] flex flex-col rounded-t-lg border-t-2 border-r border-b border-l-2 border-t-white border-r-[#6fd4e8] border-b-[#bcd6f2] border-l-white bg-[linear-gradient(to_bottom,#96b5d0,#bbcfee_46px,#c3d7f0_140px,#b9d2ee_220px,#bccfee)] pr-[10px] pb-[10px] pl-2 shadow-[0_0_2px_#000]" aria-label="Patient chart">
    <header className="h-[43px] shrink-0" />
    <div className="flex min-h-0 flex-1 flex-col border border-[#666] bg-[#f0f0f0] pt-[5px] pb-5">
      <div className="pl-[6px]">
        <PatientBar />
      </div>
      <div className="mt-[14px] flex items-end pl-[14px]" role="tablist">
        <ChartTab label="Registration" icon={<BookIcon />} className="w-[136px]" />
        <ChartTab label="Chart" icon={<ClipboardIcon />} className="w-[95px]" active />
        <ChartTab label="Orders" icon={<OrdersIcon />} className="mr-1 w-[97px]" />
        <ChartTab label="Disposition" icon={<DoorIcon />} className="mr-[2px] w-[127px]" />
        <ChartTab label="Documents" icon={<DocsIcon />} className="mr-[2px] w-[132px]" />
        <ChartTab label="Attachments" icon={<ClipIcon />} className="mr-[2px] w-[140px]" />
        <ChartTab label="Events" icon={<EventsIcon />} className="w-[102px]" />
        <a href="#history" className="mb-1 ml-[53px] flex items-center gap-2 text-xl leading-7 whitespace-nowrap text-[#1c14d0]">
          <HistoryIcon />
          History (6)
        </a>
      </div>
      <div className="ml-[10px] flex min-h-0 flex-1 flex-col border-t-2 border-b-2 border-l-2 border-t-white border-b-[#777] border-l-white pt-[7px]">
        <div className="flex items-end pl-[7px]" role="tablist">
          <ViewTab label="Physician" icon={<ClipboardIcon />} className="w-[153px] pl-3" />
          <ViewTab label="Phys View" icon={<MagnifierIcon />} className="mr-px w-[162px] pl-3" active />
          <ViewTab label="Phys Charges" icon={<MagnifierIcon />} className="w-[192px] pl-2" />
          <ViewTab label="Nurse Chart" icon={<MagnifierIcon />} className="mr-[2px] w-[175px] pl-3" />
          <ViewTab label="Vital Sign Graph" icon={<MagnifierIcon />} className="w-[212px] pl-2" />
        </div>
        <div className="mb-[10px] ml-1 flex min-h-0 flex-1 gap-2 border-t-2 border-b-2 border-l-2 border-t-white border-b-[#999] border-l-white pt-1 pb-[5px] pl-[7px]">
          <div className="relative flex min-w-0 flex-1 overflow-hidden border-2 border-t-[#666] border-r-[#777] border-b-[#888] border-l-[#666] bg-white">
            <div className="min-w-0 flex-1 overflow-hidden pt-11 pr-[18px] pl-[15px] text-xl leading-6">
              <OrdersTable />
              <h2 className="mt-[25px] leading-6 font-bold">Dispensed Medications:</h2>
              <div className="grid h-8 grid-cols-[59px_1fr_78px_60px_70px_74px_105px_82px_48px] divide-x-2 divide-black border border-black">
                <i /><i /><i /><i /><i /><i /><i /><i /><i />
              </div>
            </div>
            <ScrollBar />
            <Callout />
          </div>
          <div className="mr-[13px] flex w-[72px] shrink-0 flex-col gap-[5px] pt-[6px]">
            <ToolButton label="Print" icon={<PrinterIcon />} />
            <ToolButton label="Audit" icon={<PencilIcon />} />
            <ToolButton label="Search" icon={<BinocularsIcon />} />
          </div>
        </div>
      </div>
    </div>
  </section>
);

const DesktopIcon = ({ label, icon }: { label: string; icon: React.ReactNode }) => (
  <button type="button" className="flex w-[146px] flex-col items-center justify-end gap-[5px] font-['Open_Sans',sans-serif] text-[17px] leading-[26px] text-white">
    {icon}
    {label}
  </button>
);

export default function App() {
  return (
    <main className="relative h-screen overflow-hidden bg-black font-['Liberation_Sans',Arial,sans-serif] text-black">
      <nav className="flex w-[146px] flex-col" aria-label="Desktop">
        <div className="flex h-[94px] items-end"><DesktopIcon label="Computer" icon={<ComputerIcon />} /></div>
        <div className="flex h-[130px] items-end"><DesktopIcon label="Network" icon={<NetworkIcon />} /></div>
        <div className="flex h-[131px] items-end"><DesktopIcon label="Recycle Bin" icon={<RecycleIcon />} /></div>
      </nav>

      <section className="absolute inset-x-[184px] inset-y-0 flex flex-col rounded-t-md border-r border-l-2 border-r-[#5cc4dc] border-l-[#eef4fa] bg-[linear-gradient(to_bottom,#9db7d2,#d4dff2_178px,#b3cbe8_180px,#c3d4e8)] pr-[6px] pl-[6px]">
        <div className="flex min-h-0 flex-1 flex-col border-t-4 border-r-2 border-l-4 border-t-[#66676a] border-r-[#66676a] border-l-[#73777c] bg-[#b4b4b4] pt-[5px] pr-[6px] pl-[7px]">
          <div className="z-10 -mb-[2px] flex items-end gap-[2px]" role="tablist">
            <AppTab label="Locator" icon={<BedIcon />} className="w-[121px] pr-[10px]" active />
            <AppTab label="Patients" icon={<PaperIcon />} className="w-[125px] pr-3" />
            <AppTab label="Messaging" icon={<PagerIcon />} className="w-[142px] pr-[10px]" />
            <AppTab label="Staff" icon={<StaffIcon />} className="w-[100px] pr-3" />
            <AppTab label="Portal" icon={<GlobeIcon />} className="w-[108px] pr-[11px]" />
            <AppTab label="OpCenter" icon={<BarsIcon />} className="w-[135px] pr-[11px]" />
            <h1 className="mb-[2px] ml-2 flex h-[49px] flex-1 items-center justify-center rounded-t border-2 border-[#7f9f35] bg-linear-to-b from-[#a5bf88] via-[#72a868] to-[#76ad6c] pb-px text-2xl font-bold">
              Dr. Carter, MD
            </h1>
          </div>
          <div className="flex min-h-0 flex-1 flex-col border-t-2 border-r border-l-2 border-[#4c4d50] bg-[#b4b4b2] pt-1 pr-[5px] pl-1">
            <div className="z-10 -mb-[2px] flex items-end gap-px" role="tablist">
              <SubTab label="Overview" className="w-[84px]" active />
              <SubTab label="Acute" className="w-[62px]" />
              <SubTab label="Minor" className="w-[62px]" />
              <SubTab label="Disaster" className="w-[75px]" />
            </div>
            <div className="flex min-h-0 flex-1 flex-col border-t-2 border-r border-l-2 border-[#4c4d50] bg-[#aeada0] pt-2 pr-[5px] pl-px">
              <Board />
            </div>
          </div>
        </div>
      </section>

      <ChartWindow />

      <button type="button" aria-label="Close" className="absolute top-[52px] left-1/2 z-20 flex size-[60px] -translate-x-1/2 items-center justify-center rounded-full bg-[#3b3e47]">
        <svg width="18" height="18" viewBox="0 0 18 18" aria-hidden="true"><path d="M1 1l16 16M17 1L1 17" stroke="#fff" strokeWidth="2.500" /></svg>
      </button>
    </main>
  );
}
